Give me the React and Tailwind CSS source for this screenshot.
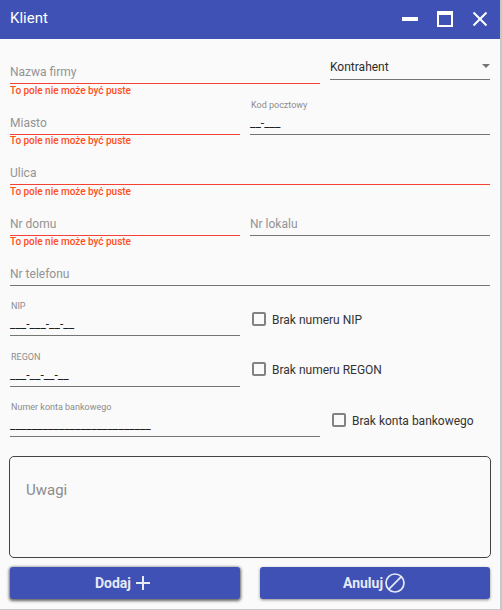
import React from "react";

const ERROR = "To pole nie może być puste";

function Field({ label, value, invalid, width, errorLeading = "leading-[14px]" }) {
  return (
    <div className={`flex h-full flex-col justify-end ${width}`}>
      {value && (
        <span className="mb-[4px] pl-px text-[9px] leading-[10px] whitespace-nowrap text-[#8c8c8c]">
          {label}
        </span>
      )}
      <div
        className={`flex h-[21px] items-start border-b text-[12px] leading-[16px] whitespace-nowrap ${
          invalid ? "border-[#f44336]" : "border-[#757575]"
        }`}
      >
        {value ? (
          <span className="pt-[2px] text-[12px] leading-[14px] text-[#212121]">{value}</span>
        ) : (
          <span className="pt-px text-[#939393]">{label}</span>
        )}
      </div>
      {invalid && (
        <div className="h-0 overflow-visible">
          <p className={`text-[10px] font-medium tracking-[-0.02px] whitespace-nowrap text-[#ff4f1a] ${errorLeading}`}>
            {ERROR}
          </p>
        </div>
      )}
    </div>
  );
}

function Checkbox({ label }) {
  return (
    <label className="flex items-center gap-[6px] self-end pb-[8px] pl-[2px] text-[12px] leading-[16px] whitespace-nowrap text-[#333]">
      <span className="mb-[2px] h-[14px] w-[14px] rounded-[2px] border-2 border-[#828282]" />
      {label}
    </label>
  );
}

export default function App() {
  return (
    <div
      className="flex h-[610px] w-[502px] flex-col overflow-hidden bg-[#c8c8c8]"
      style={{ fontFamily: "Roboto, sans-serif" }}
    >
      <main className="h-[609px] w-[500px] bg-[#fafafa]">
        <header className="flex h-[39px] items-center bg-[#3f51b5] pl-[10px] text-white">
          <h1 className="mb-[3px] flex-1 text-[15px] leading-[20px]">Klient</h1>
          <svg width="90" height="18" viewBox="0 0 90 18" className="mr-[8px] mb-px shrink-0">
            <path d="M0 7h16v4H0z" fill="white" />
            <path d="M35 1h16v16H35zM37 5v10h12V5z" fill="white" fillRule="evenodd" />
            <path d="M71.5 2.5l13 13M84.500 2.500l-13 13" stroke="white" strokeWidth="2" fill="none" />
          </svg>
        </header>

        <form className="px-[10px]">
          <div className="flex h-[45px] gap-[10px]">
            <Field label="Nazwa firmy" invalid width="w-[310px]" />
            <div className="mb-[4px] flex h-[21px] w-[160px] self-end border-b border-[#757575] text-[12px] leading-[16px] text-[#2c2c2c]">
              <span className="flex-1">Kontrahent</span>
              <svg width="8" height="4" viewBox="0 0 8 4" className="mt-[5px]">
                <path d="M0 0h8L4 4z" fill="#757575" />
              </svg>
            </div>
          </div>
          <div className="flex h-[51px] gap-[10px]">
            <Field label="Miasto" invalid width="w-[230px]" errorLeading="leading-[12px]" />
            <Field label="Kod pocztowy" value="__-___" width="w-[240px]" />
          </div>
          <div className="flex h-[50px]">
            <Field label="Ulica" invalid width="w-full" />
          </div>
          <div className="flex h-[51px] gap-[10px]">
            <Field label="Nr domu" invalid width="w-[230px]" errorLeading="leading-[12px]" />
            <Field label="Nr lokalu" width="w-[240px]" />
          </div>
          <div className="flex h-[50px]">
            <Field label="Nr telefonu" width="w-full" />
          </div>
          <div className="flex h-[50px] gap-[10px]">
            <Field label="NIP" value="___-___-__-__" width="w-[230px]" />
            <Checkbox label="Brak numeru NIP" />
          </div>
          <div className="flex h-[51px] gap-[10px]">
            <Field label="REGON" value="___-__-__-__" width="w-[230px]" />
            <div className="mb-px flex">
              <Checkbox label="Brak numeru REGON" />
            </div>
          </div>
          <div className="flex h-[50px] gap-[10px]">
            <Field label="Numer konta bankowego" value="__________________________" width="w-[310px]" />
            <Checkbox label="Brak konta bankowego" />
          </div>

          <div className="-mx-px mt-[19px] h-[102px] rounded-[5px] border border-[#444] px-[16px] pt-[24px] text-[15px] leading-[18px] text-[#8c8c8c]">
            Uwagi
          </div>

          <div className="mt-[9px] flex gap-[20px] text-[14px] font-bold text-[#e6e9f6]">
            <button
              type="button"
              className="flex h-[32px] w-[230px] items-center justify-center gap-[5px] rounded-[3px] bg-[#3f51b5] pr-[5px] shadow-[0_1px_3px_1px_rgba(0,0,0,0.6)]"
            >
              Dodaj
              <svg width="14" height="14" viewBox="0 0 14 14">
                <path d="M7 0v14M0 7h14" stroke="currentColor" strokeWidth="2" />
              </svg>
            </button>
            <button
              type="button"
              className="flex h-[32px] w-[230px] items-center justify-center gap-[2px] rounded-[3px] bg-[#3f51b5] pr-[2px] shadow-[0_1px_3px_rgba(0,0,0,0.45)]"
            >
              Anuluj
              <svg width="20" height="20" viewBox="0 0 20 20" fill="none" stroke="currentColor" strokeWidth="1.7">
                <circle cx="10" cy="10" r="9" />
                <path d="M3.700 16.300L16.300 3.700" />
              </svg>
            </button>
          </div>
        </form>
      </main>
    </div>
  );
}
